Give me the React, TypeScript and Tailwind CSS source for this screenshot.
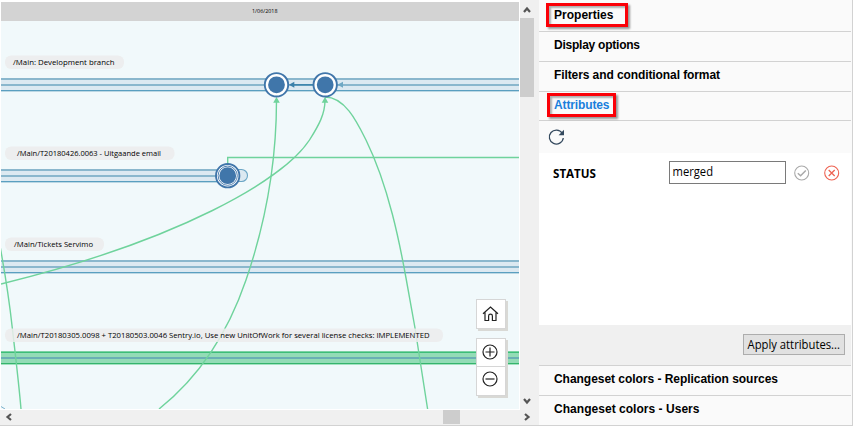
import React from "react";

const SEGOE = "font-['Open_Sans','Noto_Sans',sans-serif]";

function Band({ y, end = 519 }: { y: number; end?: number }) {
  return (
    <g shapeRendering="crispEdges">
      <rect x="0" y={y} width={end} height="13" fill="#dce9f1" />
      <rect x="0" y={y} width={end} height="2" fill="#8ab7cd" />
      <rect x="0" y={y + 6} width={end} height="2" fill="#8ab7cd" />
      <rect x="0" y={y + 12} width={end} height="1" fill="#5a9fc0" />
      <rect x="0" y={y + 13} width={end} height="1" fill="#bcd8e4" />
    </g>
  );
}

function GreenBand({ y }: { y: number }) {
  return (
    <g shapeRendering="crispEdges">
      <rect x="0" y={y} width="519" height="14" fill="#93dcb6" />
      <rect x="0" y={y} width="519" height="1" fill="#7bd3a4" />
      <rect x="0" y={y + 1} width="519" height="1" fill="#3dbd78" />
      <rect x="0" y={y + 6} width="519" height="2" fill="#6aafb4" />
      <rect x="0" y={y + 12} width="519" height="1" fill="#35b46c" />
      <rect x="0" y={y + 13} width="519" height="1" fill="#a4e2c1" />
    </g>
  );
}

function Node({ x, y }: { x: number; y: number }) {
  return (
    <g>
      <circle cx={x} cy={y} r="11.7" fill="#fff" stroke="#4076aa" strokeWidth="1.9" />
      <circle cx={x} cy={y} r="8.4" fill="#4076aa" />
    </g>
  );
}

function Label({ y, w, tx, tw, children }: { y: number; w: number; tx: number; tw: number; children: string }) {
  return (
    <g>
      <rect x="5" y={y} width={w} height="13.5" rx="6" fill="#ececec" fillOpacity="0.85" />
      <text
        x={tx}
        y={y + 9.6}
        textLength={tw}
        lengthAdjust="spacingAndGlyphs"
        fontSize="8"
        fill="#000"
        className={SEGOE}
      >
        {children}
      </text>
    </g>
  );
}

function Diagram() {
  return (
    <svg width="518" height="407" viewBox="1 2 518 407" className="block bg-[#f1f9fb]">
      <rect x="0" y="2" width="519" height="19" fill="#d3d3d3" />
      <text x="252" y="13.3" fontSize="5.6" textLength="25.5" lengthAdjust="spacingAndGlyphs" fill="#000" className={SEGOE}>
        1/06/2018
      </text>

      <Band y={78} />
      <path d="M228 169.5 H241.5 A6 6 0 0 1 241.5 181.5 H228" fill="#dce9f1" stroke="#6ba6c5" strokeWidth="1.1" />
      <Band y={169} end={228} />
      <Band y={260} />
      <GreenBand y={351} />

      <rect x="292" y="84" width="22" height="1.6" fill="#3f86ad" />
      <path d="M289 84.8 L294.3 81.8 V87.8 Z" fill="#3a80aa" />
      <path d="M337.5 84.8 L343 81.8 V87.8 Z" fill="#6fa8c4" />

      <g fill="none" stroke="#6fd39c" strokeWidth="1.4">
        <path d="M276.5 100 C276.5 150 270 210 246 280 C233 318 208 370 159 409" />
        <path d="M325 100 C325 114 319 125 309.5 140 C283 180 180 240 1 284" />
        <path d="M325 97 C345 97 357 122 366 140 C389 187 400 245 406 278 L415 328 L427.6 409" />
        <path d="M0 246 C7 284 10 307 12.3 328 C16 360 19 385 21 409" />
        <path d="M227.7 165 V157.5 H519" />
      </g>
      <path d="M276.5 97 L279.8 102.8 H273.2 Z M325 97 L328.3 102.8 H321.7 Z" fill="#6fd39c" />
      <path d="M1 406.5 L5 409" stroke="#7ab0cb" />

      <Node x={276.5} y={84.8} />
      <Node x={325.2} y={84.8} />
      <Node x={227.7} y={175.7} />
      <circle cx="227.7" cy="175.7" r="9.6" fill="none" stroke="#4076aa" strokeWidth="0.9" />

      <Label y={55.4} w={119} tx={13} tw={101.5}>/Main: Development branch</Label>
      <Label y={146.4} w={169.5} tx={17} tw={144}>/Main/T20180426.0063 - Uitgaande email</Label>
      <Label y={237.4} w={99} tx={14} tw={79}>/Main/Tickets Servimo</Label>
      <Label y={328.4} w={438} tx={17} tw={412.5}>
        /Main/T20180305.0098 + T20180503.0046 Sentry.io, Use new UnitOfWork for several license checks: IMPLEMENTED
      </Label>
    </svg>
  );
}

function CanvasControls() {
  return (
    <div className="absolute left-[476px] top-[299px] flex flex-col gap-[9px]">
      <button className="flex h-[30px] w-[30px] items-center justify-center border border-[#d6d6d6] bg-white pb-px pr-px shadow-[2px_2px_0_#d9d9d5]">
        <svg width="17" height="16" viewBox="0 0 17 16" fill="none" stroke="#222" strokeWidth="1.2">
          <path d="M1 7.8 L8.5 1 L16 7.8 M3 6.5 V14.5 H6.6 V10 Q6.6 8.2 8.5 8.2 Q10.4 8.2 10.4 10 V14.5 H14 V6.5" />
        </svg>
      </button>
      <div className="flex h-[58px] w-[30px] flex-col border border-[#d6d6d6] bg-white shadow-[2px_2px_0_#d9d9d5]">
        <button className="flex h-[28px] items-center justify-center border-b border-[#d6d6d6] pb-[2px] pr-[2px]">
          <svg width="16" height="16" viewBox="0 0 16 16" fill="none" stroke="#222" strokeWidth="1.2">
            <circle cx="8" cy="8" r="7" />
            <path d="M3.5 8 H12.5 M8 3.5 V12.5" />
          </svg>
        </button>
        <button className="flex h-[27px] items-center justify-center pb-[3px] pr-[2px]">
          <svg width="16" height="16" viewBox="0 0 16 16" fill="none" stroke="#222" strokeWidth="1.2">
            <circle cx="8" cy="8" r="7" />
            <path d="M3.5 8 H12.5" />
          </svg>
        </button>
      </div>
    </div>
  );
}

function Chevron({ d }: { d: string }) {
  return (
    <svg width="8" height="8" viewBox="0 0 8 8" fill="none" stroke="#555" strokeWidth="2.2" className="block shrink-0">
      <path d={d} />
    </svg>
  );
}

function Section({ title, w, active, mark, h = "h-[30px]", pad = "pt-[3px]" }: { title: string; w: number; active?: boolean; mark?: string; h?: string; pad?: string }) {
  return (
    <div className={`relative box-border flex ${h} ${pad} shrink-0 items-start border-b border-[#d2d2d2] bg-[#fafafa] pl-[15px]`}>
      {mark && <span className={`absolute h-6 border-[3px] border-[#fb0007] shadow-[2px_2px_2px_rgba(0,0,0,0.4),inset_2px_2px_2px_rgba(0,0,0,0.3)] ${mark}`} />}
      <svg width={w + 2} height="20" className="relative block overflow-visible">
        <text
          x="0"
          y="14"
          textLength={w}
          fontSize="12"
          fontWeight="700"
          className={`font-['Liberation_Sans',Arial,sans-serif] ${active ? "fill-[#1b7fdc]" : "fill-black"}`}
        >
          {title}
        </text>
      </svg>
    </div>
  );
}

export default function App() {
  return (
    <div className="flex h-[426px] w-[853px] overflow-hidden border-b border-r border-[#d2d2d2] bg-[#fafafa]">
      <div className="flex w-[539px] shrink-0 flex-col bg-[#f0f0f0]">
        <div className="flex h-[410px]">
          <div className="relative w-[520px] shrink-0 bg-white pl-px pt-[2px]">
            <Diagram />
            <CanvasControls />
          </div>
          <div className="flex w-[14px] flex-col items-center pb-[5px] pt-[6px]">
            <Chevron d="M1 6 L4 2.5 L7 6" />
            <div className="mt-[4px] h-[79px] w-full bg-[#cdcdcd]" />
            <div className="flex-1" />
            <Chevron d="M1 2 L4 5.5 L7 2" />
          </div>
        </div>
        <div className="flex h-[15px] w-[534px] items-center pb-px pl-[5px] pr-[3px]">
          <Chevron d="M6 1 L2.5 4 L6 7" />
          <div className="ml-[430px] h-[14px] w-[17px] bg-[#cdcdcd]" />
          <div className="flex-1" />
          <Chevron d="M2 1 L5.5 4 L2 7" />
        </div>
      </div>

      <div className="flex w-[312px] shrink-0 flex-col">
        <Section title="Properties" w={59.5} h="h-8" pad="pt-[5px]" mark="left-[7px] top-[3px] w-[82px]" />
        <Section title="Display options" w={86} />
        <Section title="Filters and conditional format" w={166} />
        <Section title="Attributes" w={55.5} active h="h-[29px]" mark="left-[8px] top-px w-[69px]" />
        <div className="flex h-8 shrink-0 items-center bg-[#fafafa] pl-[9px]">
          <svg width="17" height="17" viewBox="0 0 17 17" fill="none" stroke="#34495e" strokeWidth="1.3">
            <path d="M14.2 4.2 A7 7 0 1 0 15.3 9" />
            <path d="M16 0.8 V6.2 H10.6 Z" fill="#34495e" stroke="none" />
          </svg>
        </div>
        <div className="h-[172px] shrink-0 bg-white pl-[14px] pt-[8px]">
          <div className="flex h-[23px] items-center">
            <svg width="116" height="23" className="block">
              <text x="0" y="17" textLength="43" lengthAdjust="spacingAndGlyphs" fontSize="12" fontWeight="700" className={SEGOE}>
                STATUS
              </text>
            </svg>
            <div className="h-[23px] w-[117px] border border-[#7a7a7a] bg-white">
              <svg width="115" height="21" className="block">
                <text x="2.5" y="14" textLength="40.5" lengthAdjust="spacingAndGlyphs" fontSize="12" className={SEGOE}>
                  merged
                </text>
              </svg>
            </div>
            <svg width="16" height="16" viewBox="0 0 16 16" fill="none" stroke="#a9a9a9" strokeWidth="1.1" className="ml-[8px]">
              <circle cx="7.7" cy="8" r="7" />
              <path d="M3.8 8.2 L6.6 10.7 L11.8 5.5" strokeWidth="1.5" />
            </svg>
            <svg width="16" height="16" viewBox="0 0 16 16" fill="none" stroke="#ee6352" strokeWidth="1.1" className="ml-[14px]">
              <circle cx="7.7" cy="8" r="7" />
              <path d="M4.7 5 L10.7 11 M10.7 5 L4.7 11" strokeWidth="1.3" />
            </svg>
          </div>
        </div>
        <div className="flex h-[41px] shrink-0 justify-end border-b border-[#d2d2d2] bg-[#f0f0f0] pr-[6px] pt-[9px]">
          <button className="block h-[21px] w-[102px] border border-[#adadad] bg-[#e1e1e1]">
            <svg width="100" height="19" className="block overflow-visible">
              <text x="3.5" y="14" textLength="92.5" lengthAdjust="spacingAndGlyphs" fontSize="12" className={SEGOE}>
                Apply attributes...
              </text>
            </svg>
          </button>
        </div>
        <Section title="Changeset colors - Replication sources" w={224} />
        <Section title="Changeset colors - Users" w={145.5} />
      </div>
    </div>
  );
}
